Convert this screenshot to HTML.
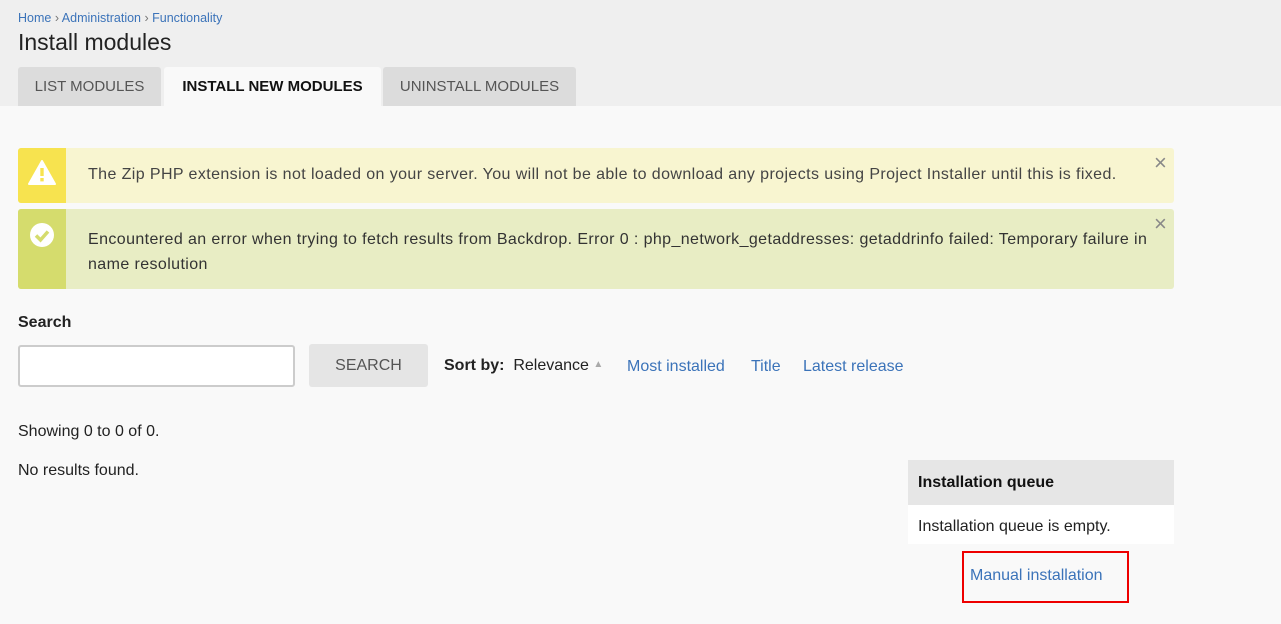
<!DOCTYPE html>
<html><head><meta charset="utf-8"><style>
*{margin:0;padding:0;box-sizing:border-box}
body{width:1281px;height:624px;background:#f9f9f9;font-family:"Liberation Sans",sans-serif;color:#222;position:relative;overflow:hidden;font-size:16px}
.a{position:absolute;white-space:nowrap}
a,.l{color:#3b73b9;text-decoration:none}
.tab{position:absolute;top:67px;height:39px;font-size:15px;line-height:39px;text-align:center;border-radius:3px 3px 0 0;color:#555}
</style></head><body>
<div class="a" style="left:0;top:0;width:1281px;height:106px;background:#efefef"></div>
<div class="a" style="left:18px;top:11px;font-size:12.5px"><span class="l">Home</span> <span style="color:#777">›</span> <span class="l">Administration</span> <span style="color:#777">›</span> <span class="l">Functionality</span></div>
<div class="a" style="left:18px;top:29px;font-size:23px;color:#222">Install modules</div>
<div class="tab" style="left:18px;width:143px;background:#dcdcdc">LIST MODULES</div>
<div class="tab" style="left:164px;width:217px;background:#f9f9f9;color:#111;font-weight:bold">INSTALL NEW MODULES</div>
<div class="tab" style="left:383px;width:193px;background:#dcdcdc">UNINSTALL MODULES</div>

<div class="a" style="left:18px;top:148px;width:1156px;height:55px;background:#f8f5d0;border-radius:3px"></div>
<div class="a" style="left:18px;top:148px;width:48px;height:55px;background:#f7e34f;border-radius:3px 0 0 3px"></div>
<svg class="a" style="left:27px;top:159px" width="30" height="28" viewBox="0 0 30 28"><path d="M15 2 L28 25 L2 25 Z" fill="#fff" stroke="#fff" stroke-width="2" stroke-linejoin="round"/><rect x="13.3" y="9" width="3.4" height="8" fill="#f7e34f"/><rect x="13.3" y="19" width="3.4" height="3.4" fill="#f7e34f"/></svg>
<div class="a" style="left:88px;top:166px;color:#444;letter-spacing:0.4px">The Zip PHP extension is not loaded on your server. You will not be able to download any projects using Project Installer until this is fixed.</div>
<div class="a" style="left:1154px;top:150px;color:#888;font-size:22px">×</div>

<div class="a" style="left:18px;top:209px;width:1156px;height:80px;background:#e8edc4;border-radius:3px"></div>
<div class="a" style="left:18px;top:209px;width:48px;height:80px;background:#d5dc6d;border-radius:3px 0 0 3px"></div>
<svg class="a" style="left:29px;top:222px" width="26" height="26" viewBox="0 0 26 26"><circle cx="13" cy="13" r="12" fill="#fff"/><path d="M7 13.5 L11.5 18 L19 9.5" fill="none" stroke="#d5dc6d" stroke-width="3.5"/></svg>
<div class="a" style="left:88px;top:227px;color:#333;line-height:25px;letter-spacing:0.4px">Encountered an error when trying to fetch results from Backdrop. Error 0 : php_network_getaddresses: getaddrinfo failed: Temporary failure in<br>name resolution</div>
<div class="a" style="left:1154px;top:211px;color:#888;font-size:22px">×</div>

<div class="a" style="left:18px;top:314px;font-weight:bold">Search</div>
<div class="a" style="left:18px;top:345px;width:277px;height:42px;background:#fff;border:2px solid #ccc;border-radius:3px"></div>
<div class="a" style="left:309px;top:344px;width:119px;height:43px;background:#e5e5e5;border-radius:3px;text-align:center;line-height:43px;color:#555">SEARCH</div>
<div class="a" style="left:444px;top:357px"><b>Sort by:</b>&nbsp; Relevance <span style="color:#aaa;font-size:10px;position:relative;top:-3px">▲</span></div>
<div class="a l" style="left:627px;top:358px">Most installed</div>
<div class="a l" style="left:751px;top:358px">Title</div>
<div class="a l" style="left:803px;top:358px">Latest release</div>
<div class="a" style="left:18px;top:423px">Showing 0 to 0 of 0.</div>
<div class="a" style="left:18px;top:462px">No results found.</div>

<div class="a" style="left:908px;top:460px;width:266px;height:45px;background:#e6e6e6;font-weight:bold;padding:14px 10px;color:#111">Installation queue</div>
<div class="a" style="left:908px;top:505px;width:266px;height:39px;background:#fff;padding:13px 10px 0">Installation queue is empty.</div>
<div class="a" style="left:962px;top:551px;width:167px;height:52px;border:2px solid #e00"></div>
<div class="a l" style="left:970px;top:567px">Manual installation</div>
</body></html>
